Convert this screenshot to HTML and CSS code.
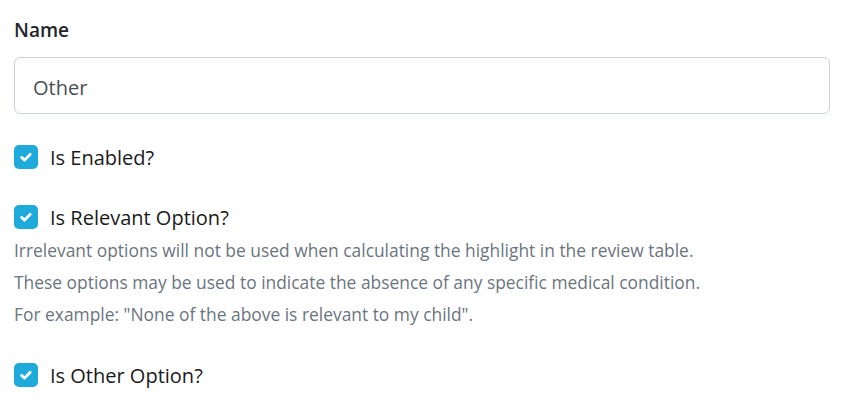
FILE: index.html
```html
<!DOCTYPE html>
<html>
<head>
<meta charset="utf-8">
<link rel="stylesheet" href="styles.css">
</head>
<body>
<form class="form">
  <div class="field">
    <label class="label" for="name">Name</label>
    <input class="input" id="name" type="text" value="Other">
  </div>
  <div class="check-group">
    <label class="check">
      <span class="box"><svg viewBox="0 0 16 16" width="16" height="16"><path d="M3.6 8.4 L6.6 11.1 L12.2 5.2" fill="none" stroke="#fff" stroke-width="2.8" stroke-linecap="round" stroke-linejoin="round"/></svg></span>
      <span class="check-text">Is Enabled?</span>
    </label>
  </div>
  <div class="check-group">
    <label class="check">
      <span class="box"><svg viewBox="0 0 16 16" width="16" height="16"><path d="M3.6 8.4 L6.6 11.1 L12.2 5.2" fill="none" stroke="#fff" stroke-width="2.8" stroke-linecap="round" stroke-linejoin="round"/></svg></span>
      <span class="check-text">Is Relevant Option?</span>
    </label>
    <div class="help">
      <p>Irrelevant options will not be used when calculating the highlight in the review table.</p>
      <p>These options may be used to indicate the absence of any specific medical condition.</p>
      <p>For example: "None of the above is relevant to my child".</p>
    </div>
  </div>
  <div class="check-group">
    <label class="check">
      <span class="box"><svg viewBox="0 0 16 16" width="16" height="16"><path d="M3.6 8.4 L6.6 11.1 L12.2 5.2" fill="none" stroke="#fff" stroke-width="2.8" stroke-linecap="round" stroke-linejoin="round"/></svg></span>
      <span class="check-text">Is Other Option?</span>
    </label>
  </div>
</form>
</body>
</html>
```

FILE: styles.css
```css
html, body {
  margin: 0;
  padding: 0;
  background: #fff;
}
body {
  font-family: "Open Sans", "Noto Sans", sans-serif;
  color: #212529;
}
.form {
  padding: 17px 11px 0 14px;
  display: flex;
  flex-direction: column;
}
.field {
  display: flex;
  flex-direction: column;
}
.label {
  font-size: 19px;
  font-weight: 600;
  line-height: 26px;
  margin-bottom: 14px;
}
.input {
  box-sizing: border-box;
  height: 57px;
  border: 1px solid #c9d1d9;
  border-radius: 6px;
  padding: 3px 18px 0;
  font: inherit;
  font-size: 20px;
  color: #495057;
  outline: none;
}
.check-group {
  margin-top: 30px;
}
.check-group + .check-group {
  margin-top: 34px;
}
.check {
  display: flex;
  align-items: center;
  gap: 12px;
  height: 26px;
}
.box {
  width: 24px;
  height: 24px;
  border-radius: 5px;
  background: #1faadc;
  display: flex;
  align-items: center;
  justify-content: center;
  flex-shrink: 0;
}
.check-text {
  font-size: 20px;
  color: #1a1a1a;
}
.help {
  margin-top: 4px;
  color: #6b7580;
  font-size: 17.4px;
}
.help p {
  margin: 0;
  line-height: 32px;
}
.check-group:last-child {
  margin-top: 32px;
}
```
